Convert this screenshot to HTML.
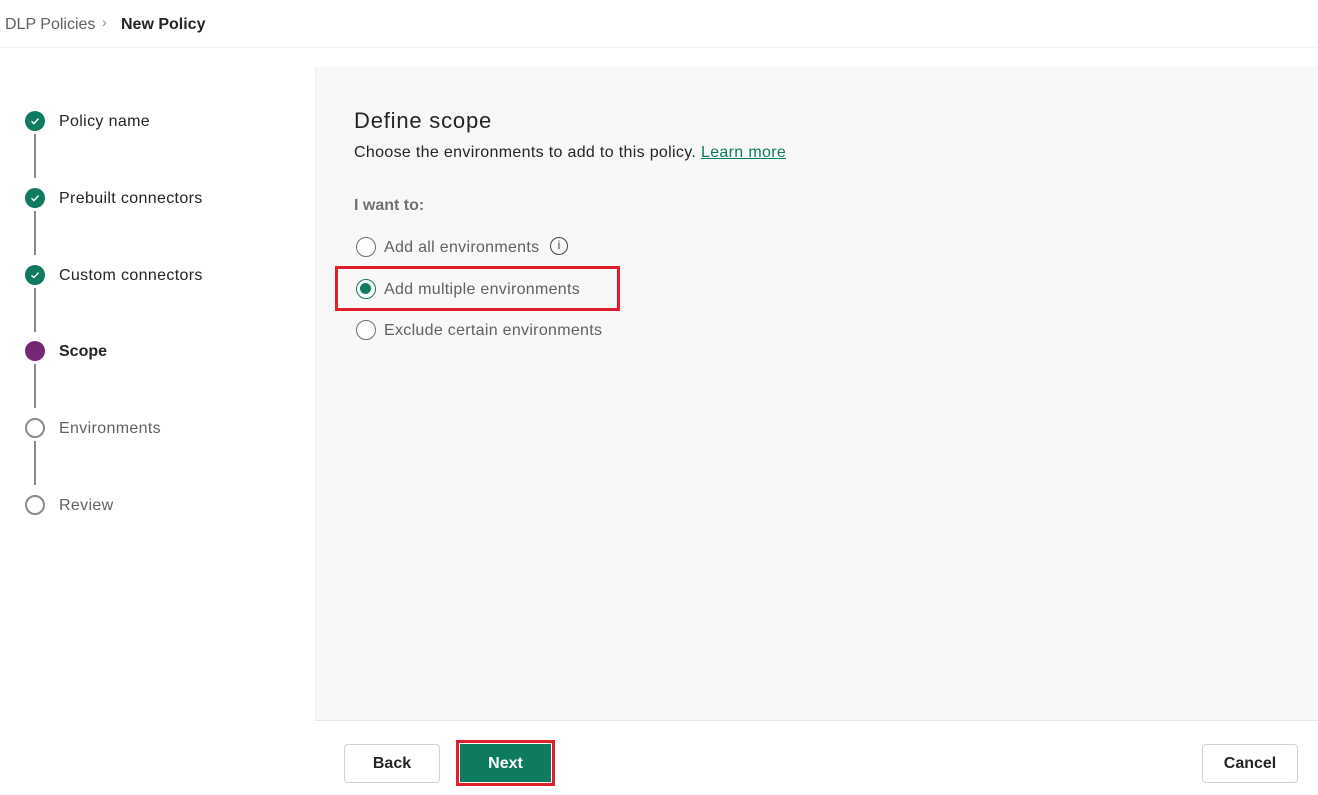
<!DOCTYPE html>
<html><head><style>
*{box-sizing:border-box;margin:0;padding:0}
body{width:1318px;height:795px;background:#fff;font-family:"Liberation Sans",sans-serif;color:#242424;position:relative;overflow:hidden}
.a{position:absolute}
.step{position:absolute;left:59px;font-size:16px;color:#242424;letter-spacing:0.35px}
.c{position:absolute;left:25px;width:20px;height:20px;border-radius:50%}
.ok{background:#0e7a5f}
.ok svg{position:absolute;left:4px;top:4px}
.line{position:absolute;left:34px;width:2px;height:44px;background:#8a8a8a}
.rad{position:absolute;left:356px;width:20px;height:20px;border-radius:50%;border:1.5px solid #707070;background:#fff}
.rl{position:absolute;left:384px;font-size:16px;color:#616161;letter-spacing:0.3px}
.btn{position:absolute;top:744px;height:39px;border:1px solid #d1d1d1;border-radius:4px;background:#fff;font-size:16px;font-weight:bold;text-align:center;line-height:37px}
</style></head><body>
<div class="a" style="left:5px;top:16px;font-size:16px;color:#616161">DLP Policies</div>
<div class="a" style="left:102px;top:14px;font-size:14px;color:#888">&#8250;</div>
<div class="a" style="left:121px;top:16px;font-size:16px;font-weight:bold;color:#242424">New Policy</div>
<div class="a" style="left:0;top:47px;width:1318px;height:1px;background:#f0f0f0"></div>
<div class="a" style="left:315px;top:67px;width:1003px;height:653px;background:#f8f8f8;border-left:1px solid #ececec"></div>
<div class="a" style="left:315px;top:720px;width:1003px;height:1px;background:#e6e6e6"></div>

<div class="c ok" style="top:111px"><svg width="12" height="12" viewBox="0 0 12 12"><path d="M2.5 6.2l2.4 2.4 4.6-5" stroke="#fff" stroke-width="1.4" fill="none"/></svg></div>
<div class="step" style="top:113px">Policy name</div>
<div class="line" style="top:134px"></div>
<div class="c ok" style="top:188px"><svg width="12" height="12" viewBox="0 0 12 12"><path d="M2.5 6.2l2.4 2.4 4.6-5" stroke="#fff" stroke-width="1.4" fill="none"/></svg></div>
<div class="step" style="top:190px">Prebuilt connectors</div>
<div class="line" style="top:211px"></div>
<div class="c ok" style="top:265px"><svg width="12" height="12" viewBox="0 0 12 12"><path d="M2.5 6.2l2.4 2.4 4.6-5" stroke="#fff" stroke-width="1.4" fill="none"/></svg></div>
<div class="step" style="top:267px">Custom connectors</div>
<div class="line" style="top:288px"></div>
<div class="c" style="top:341px;background:#742774"></div>
<div class="step" style="top:343px;font-weight:bold;letter-spacing:0">Scope</div>
<div class="line" style="top:364px"></div>
<div class="c" style="top:418px;border:2px solid #8a8a8a"></div>
<div class="step" style="top:420px;color:#616161">Environments</div>
<div class="line" style="top:441px"></div>
<div class="c" style="top:495px;border:2px solid #8a8a8a"></div>
<div class="step" style="top:497px;color:#616161">Review</div>

<div class="a" style="left:354px;top:108px;font-size:22px;color:#242424;letter-spacing:0.8px">Define scope</div>
<div class="a" style="left:354px;top:144px;font-size:16px;color:#242424;letter-spacing:0.33px">Choose the environments to add to this policy. <span style="color:#0e7a5f;text-decoration:underline">Learn more</span></div>
<div class="a" style="left:354px;top:197px;font-size:16px;font-weight:bold;color:#707070">I want to:</div>
<div class="rad" style="top:237px"></div>
<div class="rl" style="top:239px">Add all environments</div>
<div class="a" style="left:550px;top:237px;width:18px;height:18px;border:1.5px solid #444;border-radius:50%;font-size:12px;text-align:center;line-height:15px;color:#444">i</div>
<div class="a" style="left:335px;top:266px;width:285px;height:45px;border:3px solid #e01f2b"></div>
<div class="rad" style="top:279px;border-color:#0e7a5f"><div style="position:absolute;left:3px;top:3px;width:11px;height:11px;border-radius:50%;background:#0e7a5f"></div></div>
<div class="rl" style="top:281px">Add multiple environments</div>
<div class="rad" style="top:320px"></div>
<div class="rl" style="top:322px">Exclude certain environments</div>

<div class="btn" style="left:344px;width:96px">Back</div>
<div class="a" style="left:456px;top:740px;width:99px;height:46px;border:3px solid #e01f2b"></div>
<div class="btn" style="left:460px;top:744px;width:91px;height:38px;background:#0e7a5f;border-color:#0e7a5f;color:#fff;border-radius:0">Next</div>
<div class="btn" style="left:1202px;width:96px">Cancel</div>
</body></html>
